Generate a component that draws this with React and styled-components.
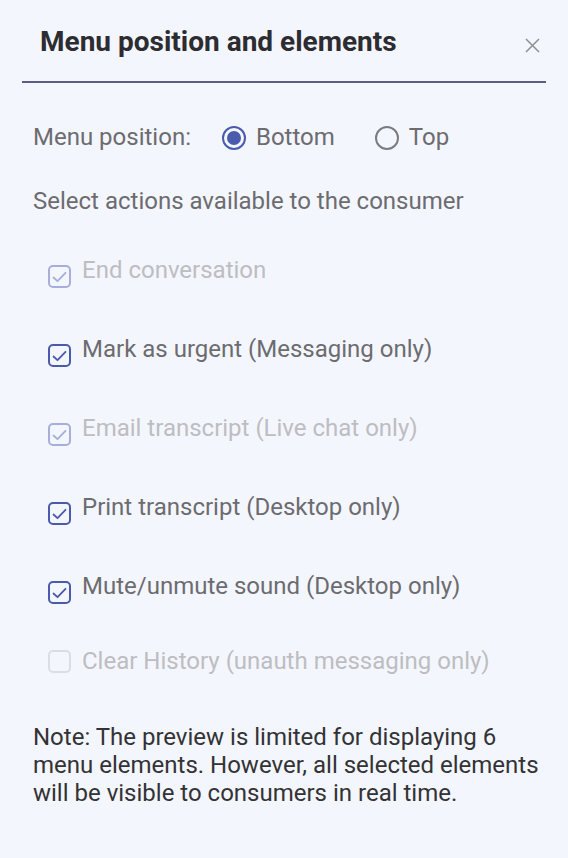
import React, { useState } from 'react';
import styled, { createGlobalStyle } from 'styled-components';

const GlobalStyle = createGlobalStyle`
  html, body {
    margin: 0;
    padding: 0;
    background: #f4f6fd;
  }
  body {
    font-family: Roboto, "Liberation Sans", sans-serif;
  }
`;

const Panel = styled.div`
  width: 568px;
  min-height: 858px;
  box-sizing: border-box;
  background: #f4f6fd;
`;

const Header = styled.div`
  display: flex;
  align-items: flex-start;
  justify-content: space-between;
  margin: 0 22px;
  padding: 25px 6px 0 18px;
  height: 56px;
  box-sizing: content-box;
  border-bottom: 2px solid #5b5e82;
`;

const Title = styled.h2`
  margin: 0;
  font-size: 28px;
  line-height: 33px;
  font-weight: 700;
  color: #2c2c31;
`;

const CloseButton = styled.button`
  border: 0;
  background: none;
  padding: 0;
  margin-top: 13px;
  width: 15px;
  height: 15px;
  color: #8e8e93;
  cursor: pointer;
  display: flex;
`;

const Body = styled.div`
  padding: 40px 23px 0 33px;
`;

const PositionRow = styled.div`
  display: flex;
  align-items: center;
`;

const Label = styled.span`
  font-size: 24px;
  line-height: 28px;
  color: ${(p) => (p.$muted ? '#bdbdc2' : '#6c6c70')};
`;

const RadioOption = styled.label`
  display: flex;
  align-items: center;
  gap: 10px;
  margin-left: ${(p) => p.$offset}px;
  cursor: pointer;
`;

const RadioCircle = styled.span`
  width: 24px;
  height: 24px;
  margin-top: 2px;
  box-sizing: border-box;
  border-radius: 50%;
  border: 2px solid ${(p) => (p.$on ? '#4a5aad' : '#7b7b80')};
  display: flex;
  align-items: center;
  justify-content: center;
  &::after {
    content: '';
    width: 14px;
    height: 14px;
    border-radius: 50%;
    background: ${(p) => (p.$on ? '#4a5aad' : 'transparent')};
  }
`;

const SectionLabel = styled.div`
  margin-top: 36px;
  font-size: 24px;
  line-height: 28px;
  color: #6c6c70;
`;

const ActionList = styled.div`
  margin-top: 41px;
  display: flex;
  flex-direction: column;
`;

const ActionRow = styled.label`
  display: flex;
  align-items: flex-start;
  gap: 11px;
  margin-left: 15px;
  height: ${(p) => p.$h}px;
  cursor: ${(p) => (p.$disabled ? 'default' : 'pointer')};
`;

const Box = styled.span`
  flex: none;
  width: 23px;
  height: 23px;
  box-sizing: border-box;
  border-radius: 5px;
  border: 2px solid ${(p) => p.$color};
  margin-top: ${(p) => (p.$checked ? 9 : 3)}px;
  display: flex;
  align-items: center;
  justify-content: center;
  color: ${(p) => p.$color};
`;

const Note = styled.p`
  margin: 48px 0 0;
  font-size: 24px;
  line-height: 28px;
  color: #333336;
`;

const actions = [
  { label: 'End conversation', checked: true, disabled: true },
  { label: 'Mark as urgent (Messaging only)', checked: true },
  { label: 'Email transcript (Live chat only)', checked: true, disabled: true },
  { label: 'Print transcript (Desktop only)', checked: true },
  { label: 'Mute/unmute sound (Desktop only)', checked: true },
  { label: 'Clear History (unauth messaging only)', checked: false, disabled: true },
];

const boxColor = (a) => {
  if (!a.checked) return '#dcdde2';
  return a.disabled ? '#a7aedb' : '#4a5aad';
};

const rowHeight = (i, count) => {
  if (i === count - 1) return 28;
  if (i === count - 2) return 75;
  return 79;
};

const App = () => {
  const [position, setPosition] = useState('bottom');
  const [items, setItems] = useState(actions);

  const toggle = (i) => {
    if (items[i].disabled) return;
    setItems(items.map((a, j) => (j === i ? { ...a, checked: !a.checked } : a)));
  };

  return (
    <Panel>
      <GlobalStyle />
      <Header>
        <Title>Menu position and elements</Title>
        <CloseButton aria-label="Close">
          <svg width="15" height="15" viewBox="0 0 15 15" fill="none" stroke="currentColor" strokeWidth="1.5">
            <path d="M1 1 L14 14 M14 1 L1 14" />
          </svg>
        </CloseButton>
      </Header>
      <Body>
        <PositionRow>
          <Label>Menu position:</Label>
          <RadioOption $offset={31} onClick={() => setPosition('bottom')}>
            <RadioCircle $on={position === 'bottom'} />
            <Label>Bottom</Label>
          </RadioOption>
          <RadioOption $offset={40} onClick={() => setPosition('top')}>
            <RadioCircle $on={position === 'top'} />
            <Label>Top</Label>
          </RadioOption>
        </PositionRow>
        <SectionLabel>Select actions available to the consumer</SectionLabel>
        <ActionList>
          {items.map((a, i) => (
            <ActionRow
              key={a.label}
              $h={rowHeight(i, items.length)}
              $disabled={a.disabled}
              onClick={() => toggle(i)}
            >
              <Box $checked={a.checked} $color={boxColor(a)}>
                {a.checked && (
                  <svg width="15" height="12" viewBox="0 0 15 12" fill="none" stroke="currentColor" strokeWidth="1.8" strokeLinecap="round" strokeLinejoin="round">
                    <path d="M1.5 6.5 L5.5 10.2 L13.5 1.8" />
                  </svg>
                )}
              </Box>
              <Label $muted={a.disabled}>{a.label}</Label>
            </ActionRow>
          ))}
        </ActionList>
        <Note>
          Note: The preview is limited for displaying 6 menu elements. However, all selected elements will be visible to consumers in real time.
        </Note>
      </Body>
    </Panel>
  );
};

export default App;
